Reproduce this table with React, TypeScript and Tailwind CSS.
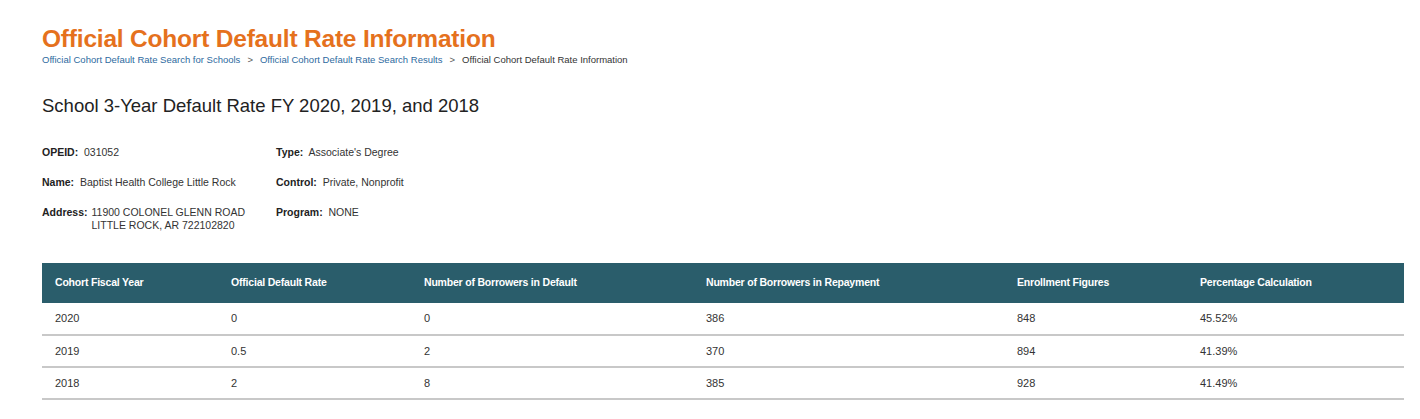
const rows = [
  { year: '2020', rate: '0', def: '0', rep: '386', enr: '848', pct: '45.52%' },
  { year: '2019', rate: '0.5', def: '2', rep: '370', enr: '894', pct: '41.39%' },
  { year: '2018', rate: '2', def: '8', rep: '385', enr: '928', pct: '41.49%' },
];

const cols = ['w-[176px]', 'w-[193px]', 'w-[282px]', 'w-[311px]', 'w-[183px]', ''];

export default function App() {
  return (
    <div className="min-h-screen bg-white pl-[42px] pr-4 pt-[24px] font-['Liberation_Sans',Arial,sans-serif] text-[#1b1b1b]">
      <h1 className="text-[24.5px] leading-[30px] font-semibold text-[#e5711d] tracking-[-0.2px]">
        Official Cohort Default Rate Information
      </h1>
      <nav className="flex items-center gap-[7px] text-[9.5px] leading-[12px]">
        <span className="text-[#2e6aa0]">Official Cohort Default Rate Search for Schools</span>
        <span className="text-[#555]">&gt;</span>
        <span className="text-[#2e6aa0]">Official Cohort Default Rate Search Results</span>
        <span className="text-[#555]">&gt;</span>
        <span className="text-[#333]">Official Cohort Default Rate Information</span>
      </nav>

      <h2 className="mt-[28px] text-[18.5px] leading-[24px] text-[#222]">
        School 3-Year Default Rate FY 2020, 2019, and 2018
      </h2>

      <div className="mt-[28px] grid grid-cols-[234px_1fr] gap-y-[17px] text-[10.5px] leading-[13px] text-[#333]">
        <div><b className="text-[#222]">OPEID:</b>&nbsp; 031052</div>
        <div><b className="text-[#222]">Type:</b>&nbsp; Associate's Degree</div>
        <div><b className="text-[#222]">Name:</b>&nbsp; Baptist Health College Little Rock</div>
        <div><b className="text-[#222]">Control:</b>&nbsp; Private, Nonprofit</div>
        <div className="flex">
          <b className="text-[#222]">Address:</b>
          <span className="ml-[4px]">11900 COLONEL GLENN ROAD<br />LITTLE ROCK, AR 722102820</span>
        </div>
        <div><b className="text-[#222]">Program:</b>&nbsp; NONE</div>
      </div>

      <table className="mt-[31px] w-[1362px] border-collapse text-[11px]">
        <thead>
          <tr className="h-[40px] bg-[#2a5d6b] text-white">
            {['Cohort Fiscal Year', 'Official Default Rate', 'Number of Borrowers in Default', 'Number of Borrowers in Repayment', 'Enrollment Figures', 'Percentage Calculation'].map((h, i) => (
              <th key={h} className={`${cols[i]} px-[13px] text-left text-[10.5px] font-bold tracking-[-0.2px]`}>{h}</th>
            ))}
          </tr>
        </thead>
        <tbody>
          {rows.map((r) => (
            <tr key={r.year} className="h-[32px] border-b-2 border-[#c8c8c8] text-[#333]">
              <td className="px-[13px]">{r.year}</td>
              <td className="px-[13px]">{r.rate}</td>
              <td className="px-[13px]">{r.def}</td>
              <td className="px-[13px]">{r.rep}</td>
              <td className="px-[13px]">{r.enr}</td>
              <td className="px-[13px]">{r.pct}</td>
            </tr>
          ))}
        </tbody>
      </table>
    </div>
  );
}
